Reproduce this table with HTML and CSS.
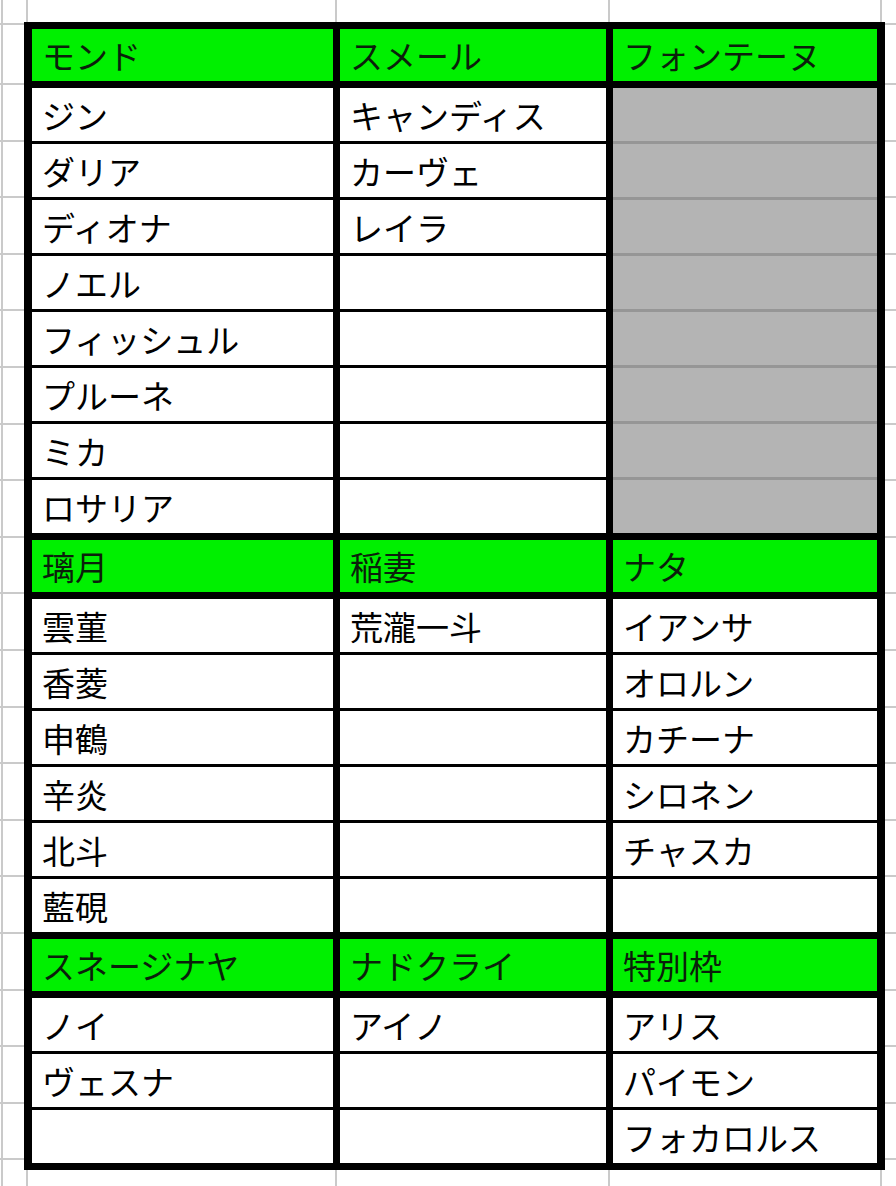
FILE: index.html
```html
<!DOCTYPE html>
<html lang="ja">
<head>
<meta charset="utf-8">
<title>地域別キャラクター表</title>
<link rel="stylesheet" href="styles.css">
</head>
<body>
<div class="sheet">
  <section class="block">
    <div class="head">
      <div class="hd">モンド</div>
      <div class="hd">スメール</div>
      <div class="hd">フォンテーヌ</div>
    </div>
    <div class="body">
      <div class="col">
        <div class="cell">ジン</div>
        <div class="cell">ダリア</div>
        <div class="cell">ディオナ</div>
        <div class="cell">ノエル</div>
        <div class="cell">フィッシュル</div>
        <div class="cell">プルーネ</div>
        <div class="cell">ミカ</div>
        <div class="cell">ロサリア</div>
      </div>
      <div class="col">
        <div class="cell">キャンディス</div>
        <div class="cell">カーヴェ</div>
        <div class="cell">レイラ</div>
        <div class="cell"></div>
        <div class="cell"></div>
        <div class="cell"></div>
        <div class="cell"></div>
        <div class="cell"></div>
      </div>
      <div class="col gray">
        <div class="cell"></div>
        <div class="cell"></div>
        <div class="cell"></div>
        <div class="cell"></div>
        <div class="cell"></div>
        <div class="cell"></div>
        <div class="cell"></div>
        <div class="cell"></div>
      </div>
    </div>
  </section>

  <section class="block">
    <div class="head">
      <div class="hd">璃月</div>
      <div class="hd">稲妻</div>
      <div class="hd">ナタ</div>
    </div>
    <div class="body">
      <div class="col">
        <div class="cell">雲菫</div>
        <div class="cell">香菱</div>
        <div class="cell">申鶴</div>
        <div class="cell">辛炎</div>
        <div class="cell">北斗</div>
        <div class="cell">藍硯</div>
      </div>
      <div class="col">
        <div class="cell">荒瀧一斗</div>
        <div class="cell"></div>
        <div class="cell"></div>
        <div class="cell"></div>
        <div class="cell"></div>
        <div class="cell"></div>
      </div>
      <div class="col">
        <div class="cell">イアンサ</div>
        <div class="cell">オロルン</div>
        <div class="cell">カチーナ</div>
        <div class="cell">シロネン</div>
        <div class="cell">チャスカ</div>
        <div class="cell"></div>
      </div>
    </div>
  </section>

  <section class="block">
    <div class="head">
      <div class="hd">スネージナヤ</div>
      <div class="hd">ナドクライ</div>
      <div class="hd">特別枠</div>
    </div>
    <div class="body">
      <div class="col">
        <div class="cell">ノイ</div>
        <div class="cell">ヴェスナ</div>
        <div class="cell"></div>
      </div>
      <div class="col">
        <div class="cell">アイノ</div>
        <div class="cell"></div>
        <div class="cell"></div>
      </div>
      <div class="col">
        <div class="cell">アリス</div>
        <div class="cell">パイモン</div>
        <div class="cell">フォカロルス</div>
      </div>
    </div>
  </section>
</div>
</body>
</html>
```

FILE: styles.css
```css
html {
  background: #ffffff;
}

body {
  margin: 0;
  box-sizing: border-box;
  min-height: 1186px;
  padding: 22px 0 19px 24px;
  font-family: "Noto Sans CJK JP", "Noto Sans", sans-serif;
  color: #000;
  background-color: #ffffff;
  background-image:
    linear-gradient(90deg,
      transparent 0 1px, #cacaca 1px 3px,
      transparent 3px 26px, #cacaca 26px 28px,
      transparent 28px 335px, #cacaca 335px 337px,
      transparent 337px 608px, #cacaca 608px 610px,
      transparent 610px 880px, #cacaca 880px 882px,
      transparent 882px),
    linear-gradient(180deg, transparent 0 23px, #cacaca 23px 25px, transparent 25px),
    repeating-linear-gradient(180deg, #cacaca 0 2px, transparent 2px 56.6px);
  background-position: 0 0, 0 0, 0 83px;
  background-repeat: no-repeat, no-repeat, no-repeat;
  background-size: 896px 1186px, 896px 1186px, 896px 1110px;
}

.sheet {
  box-sizing: border-box;
  width: 861px;
  padding: 7px 8px;
  background: #000;
  display: flex;
  flex-direction: column;
  gap: 7px;
}

.block {
  display: flex;
  flex-direction: column;
  gap: 7px;
}

.head,
.body {
  display: grid;
  grid-template-columns: 301px 266px 264px;
  column-gap: 7px;
}

.hd {
  box-sizing: border-box;
  height: 52px;
  background: #00f000;
  color: #0b1f0b;
  font-size: 33px;
  line-height: 1;
  padding-left: 10px;
  display: flex;
  align-items: center;
}

.col {
  display: flex;
  flex-direction: column;
}

.cell {
  box-sizing: border-box;
  height: 53px;
  background: #fff;
  font-size: 33px;
  line-height: 1;
  padding: 1px 0 0 10px;
  display: flex;
  align-items: center;
}

.cell + .cell {
  height: 56px;
  border-top: 3px solid #000;
}

.col.gray .cell {
  background: #b4b4b4;
}

.col.gray .cell + .cell {
  border-top-color: #969696;
}
```
